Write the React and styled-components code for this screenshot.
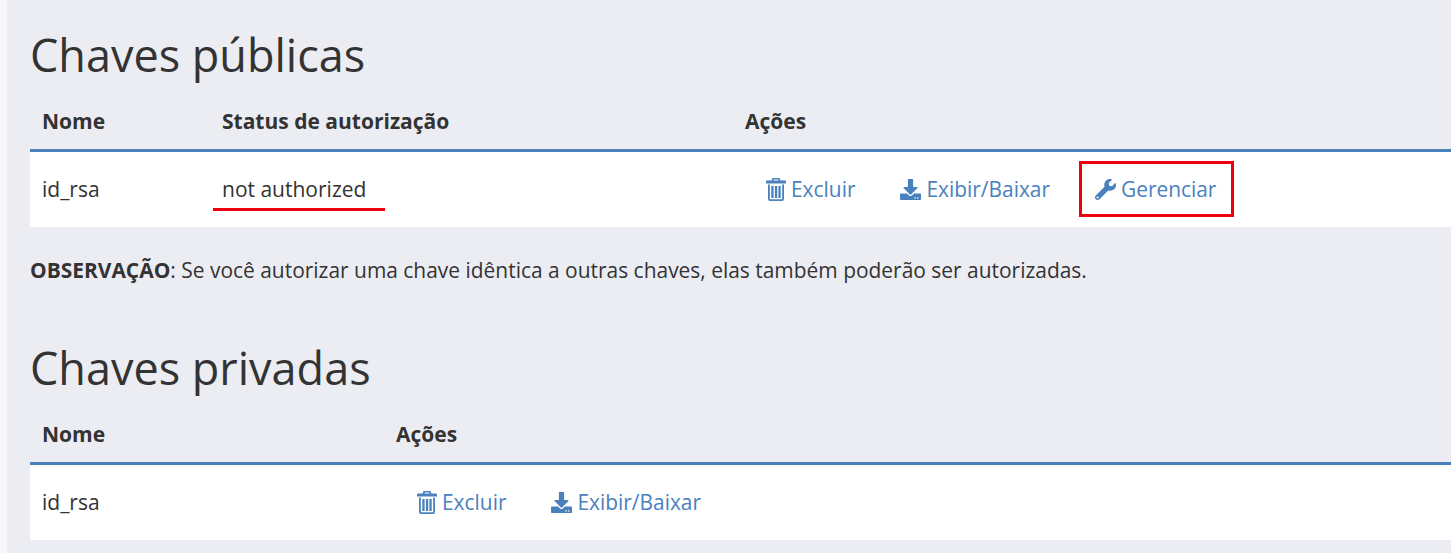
import React from 'react'
import styled, { createGlobalStyle } from 'styled-components'
import { FaDownload, FaWrench } from 'react-icons/fa'

const GlobalStyle = createGlobalStyle`
    html, body {
        margin: 0;
        padding: 0;
        background: #ecedf3;
    }
    body {
        font-family: "Open Sans", "Liberation Sans", sans-serif;
        color: #333;
        overflow: hidden;
    }
`

const Page = styled.div`
    width: 1451px;
    height: 553px;
    padding: 26px 0 0 23px;
    border-left: 7px solid #f8f8fa;
    box-sizing: border-box;
    overflow: hidden;
`

const Title = styled.h2`
    margin: 0;
    height: 73px;
    line-height: 58px;
    font-size: 45px;
    font-weight: 400;
    color: #333;
`

const Row = styled.div`
    display: grid;
    grid-template-columns: ${props => props.$columns};
    align-items: center;
    padding-left: 12px;
    font-size: 21px;
`

const HeadRow = styled(Row)`
    height: 44px;
    padding-bottom: 6px;
    border-bottom: 3px solid #4a81bd;
    font-weight: 700;
`

const BodyRow = styled(Row)`
    height: 75px;
    padding-bottom: 1px;
    box-sizing: border-box;
    background: #fff;
`

const Cell = styled.div`
    position: relative;
    width: max-content;
`

const Underline = styled.span`
    position: absolute;
    left: -9px;
    bottom: -8px;
    width: 172px;
    height: 3px;
    background: #ee0010;
`

const Actions = styled.div`
    display: flex;
    align-items: center;
    padding-left: 21px;
`

const ActionLink = styled.a`
    position: relative;
    display: flex;
    align-items: center;
    gap: 5px;
    margin-right: ${props => props.$space || 0}px;
    color: #4a81bd;
    font-size: 20.9px;
    text-decoration: none;

    svg {
        flex: none;
    }
`

const Highlight = styled.span`
    position: absolute;
    left: -16px;
    right: -18px;
    top: -14px;
    bottom: -14px;
    border: 3px solid #ee0010;
`

const Note = styled.p`
    margin: 0;
    padding: 29px 0 55px;
    line-height: 28px;
    font-size: 20.94px;
`

const TrashIcon = () => (
    <svg width="20" height="23" viewBox="0 0 20 23" fill="currentColor">
        <path d="M6.5 0h7l1 2.6H19a1 1 0 0 1 1 1v2H0v-2a1 1 0 0 1 1-1h4.5zM7.8 1.5L7.4 2.6h5.2l-.4-1.1z" fillRule="evenodd" />
        <path d="M2 6.5h16V21a2 2 0 0 1-2 2H4a2 2 0 0 1-2-2zM3.8 6.5V21c0 .2.1.3.3.3h11.8c.2 0 .3-.1.3-.3V6.5z" fillRule="evenodd" />
        <path d="M5.3 8h2.3v12H5.3zM8.9 8h2.3v12H8.9zM12.4 8h2.3v12h-2.3z" />
    </svg>
)

const Excluir = ({ space }) => (
    <ActionLink href="#" $space={space}>
        <TrashIcon />
        Excluir
    </ActionLink>
)

const Exibir = ({ space }) => (
    <ActionLink href="#" $space={space}>
        <FaDownload size={21} />
        Exibir/Baixar
    </ActionLink>
)

export default function App() {
    return (
        <Page>
            <GlobalStyle />
            <section>
                <Title>Chaves públicas</Title>
                <HeadRow $columns="180px 523px 1fr">
                    <div>Nome</div>
                    <div>Status de autorização</div>
                    <div>Ações</div>
                </HeadRow>
                <BodyRow $columns="180px 523px 1fr">
                    <div>id_rsa</div>
                    <Cell>
                        not authorized
                        <Underline />
                    </Cell>
                    <Actions>
                        <Excluir space={45} />
                        <Exibir space={45} />
                        <ActionLink href="#">
                            <FaWrench size={21} />
                            Gerenciar
                            <Highlight />
                        </ActionLink>
                    </Actions>
                </BodyRow>
                <Note>
                    <strong>OBSERVAÇÃO</strong>: Se você autorizar uma chave idêntica a outras chaves, elas também poderão ser autorizadas.
                </Note>
            </section>
            <section>
                <Title>Chaves privadas</Title>
                <HeadRow $columns="354px 1fr">
                    <div>Nome</div>
                    <div>Ações</div>
                </HeadRow>
                <BodyRow $columns="354px 1fr">
                    <div>id_rsa</div>
                    <Actions>
                        <Excluir space={45} />
                        <Exibir />
                    </Actions>
                </BodyRow>
            </section>
        </Page>
    )
}
